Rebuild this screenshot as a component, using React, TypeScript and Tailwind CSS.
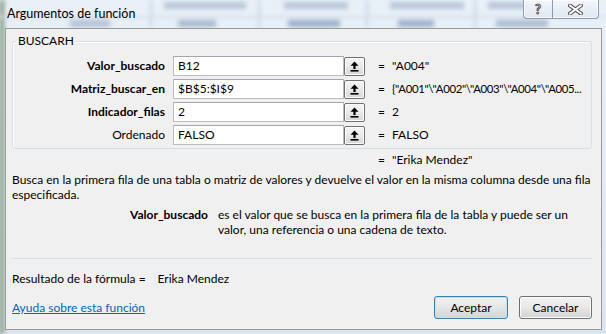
import React from "react";

function UpArrow() {
  return (
    <svg width="9" height="11" viewBox="0 0 9 11" aria-hidden="true">
      <polygon points="4.5,0.5 8.5,4.8 5.6,4.8 5.6,8 3.4,8 3.4,4.8 0.5,4.8" fill="#000" />
      <rect x="0.5" y="9" width="8" height="1.6" fill="#000" />
    </svg>
  );
}

function ArgRow({ label, bold, value, result, tight }: { label: string; bold?: boolean; value: string; result: string; tight?: boolean }) {
  return (
    <div className="flex h-[20px] items-center">
      <div className={`w-[152px] whitespace-nowrap text-right leading-[20px] ${bold ? "font-bold" : ""}`}>{label}</div>
      <div className="ml-[8px] flex h-[20px] w-[171px] items-center border border-[#b9bcc3] border-t-[#a3a6ae] bg-white pl-[4px] leading-[18px]">
        {value}
      </div>
      <button className="flex h-[19px] w-[21px] items-center justify-center rounded-[2px] border border-[#707070] bg-gradient-to-b from-[#f6f6f6] via-[#e9e9e9] to-[#d6d6d6] shadow-[inset_0_0_0_1px_#fcfcfc]">
        <UpArrow />
      </button>
      <span className="ml-[13px] w-[14px]">=</span>
      <span className={`whitespace-nowrap ${tight ? "text-[11.4px] tracking-[-0.35px]" : ""}`}>{result}</span>
    </div>
  );
}

export default function App() {
  return (
    <div className="relative h-[334px] w-[606px] overflow-hidden bg-gradient-to-b from-[#e9f0f8] via-[#e3ebf4] to-[#dae4ef] font-['Lato',sans-serif] text-[12px] text-black">
      {/* blurred glass backdrop */}
      <div className="pointer-events-none absolute inset-0 blur-[2px]">
        <div className="absolute left-0 top-0 h-full w-[5px] bg-gradient-to-r from-[#5f7f63] via-[#8aa28c] to-[#c9d5cb]" />
        <div className="absolute left-[150px] top-0 h-[28px] w-[2px] bg-[#c3d0de]" />
        <div className="absolute left-[258px] top-0 h-[28px] w-[2px] bg-[#c3d0de]" />
        <div className="absolute left-[366px] top-0 h-[28px] w-[2px] bg-[#c3d0de]" />
        <div className="absolute left-[474px] top-0 h-[28px] w-[2px] bg-[#c3d0de]" />
        <div className="absolute left-0 top-[16px] h-[2px] w-full bg-[#d3dde8]" />
        <div className="absolute left-[164px] top-[2px] h-[7px] w-[82px] bg-[#b9c7da]" />
        <div className="absolute left-[284px] top-[2px] h-[7px] w-[64px] bg-[#b9c7da]" />
        <div className="absolute left-[390px] top-[2px] h-[7px] w-[74px] bg-[#b9c7da]" />
        <div className="absolute left-[488px] top-[2px] h-[7px] w-[40px] bg-[#b9c7da]" />
        <div className="absolute left-[70px] top-[20px] h-[7px] w-[40px] bg-[#b3c2d6]" />
        <div className="absolute left-[178px] top-[20px] h-[7px] w-[38px] bg-[#a9bbd2]" />
        <div className="absolute left-[288px] top-[20px] h-[7px] w-[52px] bg-[#9fb1ca]" />
        <div className="absolute left-[398px] top-[20px] h-[7px] w-[36px] bg-[#9fb1ca]" />
        <div className="absolute left-[496px] top-[20px] h-[7px] w-[52px] bg-[#aebdd2]" />
      </div>

      <div className="relative flex h-full flex-col">
        {/* title bar */}
        <div className="flex h-[28px] items-start">
          <span className="ml-[7px] mt-[6px] text-[12.5px] leading-[16px]">Argumentos de función</span>
          <div className="ml-auto mr-[7px] flex h-[19px] rounded-b-[4px] border border-t-0 border-[#8d9cae] bg-gradient-to-b from-[#f4f7fb]/90 to-[#dfe7f1]/90 shadow-[inset_0_0_0_1px_rgba(255,255,255,0.7)]">
            <div className="flex w-[29px] items-center justify-center border-r border-[#8d9cae] text-[13px] font-bold leading-none text-[#f5f5f5] [-webkit-text-stroke:0.9px_#4b4b4b]">
              ?
            </div>
            <div className="flex w-[45px] items-center justify-center">
              <svg width="15" height="11" viewBox="0 0 15 11" aria-hidden="true">
                <path d="M2 1.5 L13 9.5 M13 1.5 L2 9.5" stroke="#4b4b4b" strokeWidth="4" strokeLinecap="square" />
                <path d="M2 1.5 L13 9.5 M13 1.5 L2 9.5" stroke="#f7f7f7" strokeWidth="2" strokeLinecap="square" />
              </svg>
            </div>
          </div>
        </div>

        {/* client panel */}
        <div className="mb-[4px] ml-[5px] mr-[4px] flex flex-1 flex-col border border-[#9a9a9a] bg-[#f0f0f0]">
          {/* group box */}
          <div className="relative ml-[6px] mt-[12px] h-[108px] w-[580px] rounded-[3px] border border-[#d5dfe5] pt-[14px] shadow-[inset_1px_1px_0_#fff]">
            <span className="absolute left-[3px] top-[-9px] bg-[#f0f0f0] px-[2px] leading-[16px]">BUSCARH</span>
            <div className="flex flex-col gap-[3px]">
              <ArgRow label="Valor_buscado" bold value="B12" result={'"A004"'} />
              <ArgRow label="Matriz_buscar_en" bold value="$B$5:$I$9" result={'{"A001"\\"A002"\\"A003"\\"A004"\\"A005...'} tight />
              <ArgRow label="Indicador_filas" bold value="2" result="2" />
              <ArgRow label="Ordenado" value="FALSO" result="FALSO" />
            </div>
          </div>

          <div className="mt-[3px] flex pl-[372px] leading-[15px]">
            <span className="w-[14px]">=</span>
            <span>"Erika Mendez"</span>
          </div>

          <div className="mt-[5px] whitespace-nowrap pl-[6px] leading-[15px]">
            <div>Busca en la primera fila de una tabla o matriz de valores y devuelve el valor en la misma columna desde una fila</div>
            <div>especificada.</div>
          </div>

          <div className="mt-[5px] flex whitespace-nowrap leading-[15px]">
            <div className="w-[202px] text-right font-bold">Valor_buscado</div>
            <div className="ml-[10px]">
              <div>es el valor que se busca en la primera fila de la tabla y puede ser un</div>
              <div>valor, una referencia o una cadena de texto.</div>
            </div>
          </div>

          <div className="ml-[6px] mr-[9px] mt-[21px] h-px bg-[#d5dfe5]" />

          <div className="mt-[12px] flex whitespace-nowrap pl-[6px] leading-[15px]">
            <span>Resultado de la fórmula =</span>
            <span className="ml-[12px]">Erika Mendez</span>
          </div>

          <div className="mt-[10px] flex h-[23px] items-center pl-[6px] pr-[9px]">
            <a href="#" className="text-[#0066cc] underline">Ayuda sobre esta función</a>
            <div className="ml-auto flex gap-[11px]">
              <button className="h-[23px] w-[74px] rounded-[3px] border border-[#3c7fb1] bg-gradient-to-b from-[#f2f2f2] via-[#e6e6e6] to-[#d4d4d4] leading-[20px] shadow-[inset_0_0_0_1px_#bde3f7]">
                Aceptar
              </button>
              <button className="h-[23px] w-[73px] rounded-[3px] border border-[#707070] bg-gradient-to-b from-[#f2f2f2] via-[#e8e8e8] to-[#d2d2d2] leading-[20px] shadow-[inset_0_0_0_1px_#fbfbfb]">
                Cancelar
              </button>
            </div>
          </div>
        </div>
      </div>
    </div>
  );
}
